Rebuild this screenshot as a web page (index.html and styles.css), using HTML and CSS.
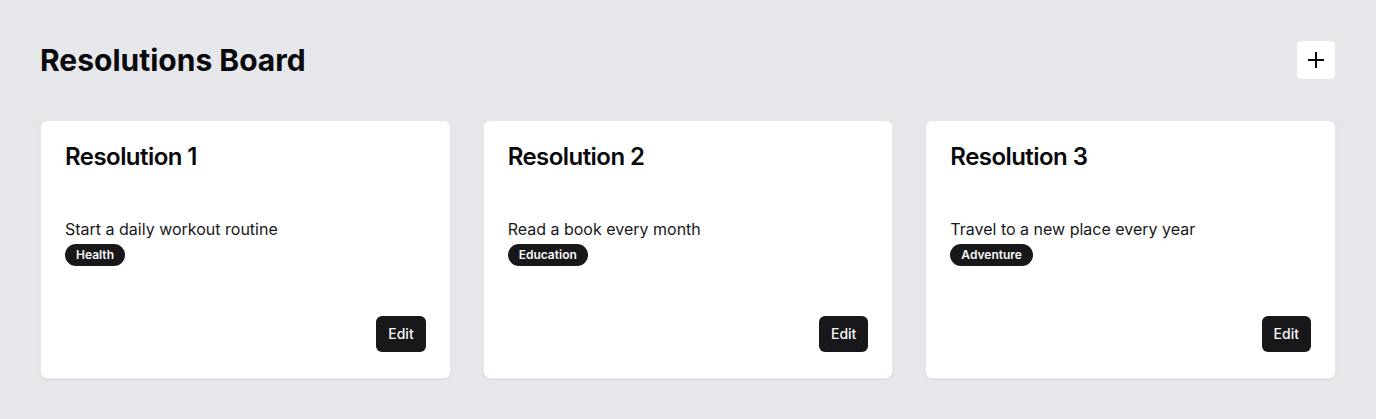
FILE: index.html
```html
<!DOCTYPE html>
<html lang="en">
<head>
<meta charset="utf-8">
<title>Resolutions Board</title>
<link rel="stylesheet" href="styles.css">
</head>
<body>
<div class="page">
  <header class="header">
    <h1 class="page-title">Resolutions Board</h1>
    <button class="add-btn" aria-label="Add resolution">
      <svg width="16" height="16" viewBox="0 0 16 16" fill="none" stroke="#09090b" stroke-width="2" stroke-linecap="butt">
        <path d="M0 8h16M8 0v16"/>
      </svg>
    </button>
  </header>
  <main class="grid">
    <div class="card">
      <div class="card-header"><h3 class="card-title">Resolution 1</h3></div>
      <div class="card-content">
        <p class="desc">Start a daily workout routine</p>
        <span class="badge">Health</span>
      </div>
      <div class="card-footer"><button class="edit-btn">Edit</button></div>
    </div>
    <div class="card">
      <div class="card-header"><h3 class="card-title">Resolution 2</h3></div>
      <div class="card-content">
        <p class="desc">Read a book every month</p>
        <span class="badge">Education</span>
      </div>
      <div class="card-footer"><button class="edit-btn">Edit</button></div>
    </div>
    <div class="card">
      <div class="card-header"><h3 class="card-title">Resolution 3</h3></div>
      <div class="card-content">
        <p class="desc">Travel to a new place every year</p>
        <span class="badge">Adventure</span>
      </div>
      <div class="card-footer"><button class="edit-btn">Edit</button></div>
    </div>
  </main>
</div>
</body>
</html>
```
FILE: styles.css
```css
* { box-sizing: border-box; }
html, body { margin: 0; padding: 0; }
body {
  background: #e5e7eb;
  font-family: Inter, "Liberation Sans", sans-serif;
  color: #09090b;
}
.page { padding: 40px; }
.header {
  display: flex;
  align-items: center;
  justify-content: space-between;
  height: 40px;
  margin-bottom: 40px;
}
.page-title {
  margin: 0;
  font-size: 30px;
  line-height: 36px;
  font-weight: 700;
}
.add-btn {
  width: 40px;
  height: 40px;
  border: 1px solid #e5e7eb;
  background: #ffffff;
  border-radius: 6px;
  display: flex;
  align-items: center;
  justify-content: center;
  padding: 0;
}
.add-btn svg { display: block; }
.grid {
  display: grid;
  grid-template-columns: repeat(3, 1fr);
  gap: 32px;
}
.card {
  background: #ffffff;
  border: 1px solid #e5e7eb;
  border-radius: 7px;
  box-shadow: 0 1px 2px rgba(0,0,0,0.05);
  height: 259px;
  display: flex;
  flex-direction: column;
}
.card-header { padding: 24px 24px 24px; }
.card-title {
  margin: 0;
  font-size: 24px;
  line-height: 24px;
  font-weight: 600;
  letter-spacing: -0.55px;
}
.card-content {
  padding: 24px 24px 0;
  display: flex;
  flex-direction: column;
  align-items: flex-start;
}
.desc {
  margin: 0;
  font-size: 16px;
  line-height: 24px;
  color: #18181b;
}
.badge {
  margin-top: 3px;
  display: inline-flex;
  align-items: center;
  height: 22px;
  padding: 0 10px;
  border: 1px solid transparent;
  border-radius: 999px;
  background: #18181b;
  color: #fafafa;
  font-size: 12px;
  font-weight: 600;
  line-height: 16px;
}
.card-footer {
  margin-top: auto;
  padding: 0 24px 26px;
  display: flex;
  justify-content: flex-end;
}
.edit-btn {
  height: 36px;
  padding: 0 12px;
  border: none;
  border-radius: 6px;
  background: #18181b;
  color: #fafafa;
  font-family: Inter, "Liberation Sans", sans-serif;
  font-size: 14px;
  font-weight: 500;
  line-height: 20px;
}
```
